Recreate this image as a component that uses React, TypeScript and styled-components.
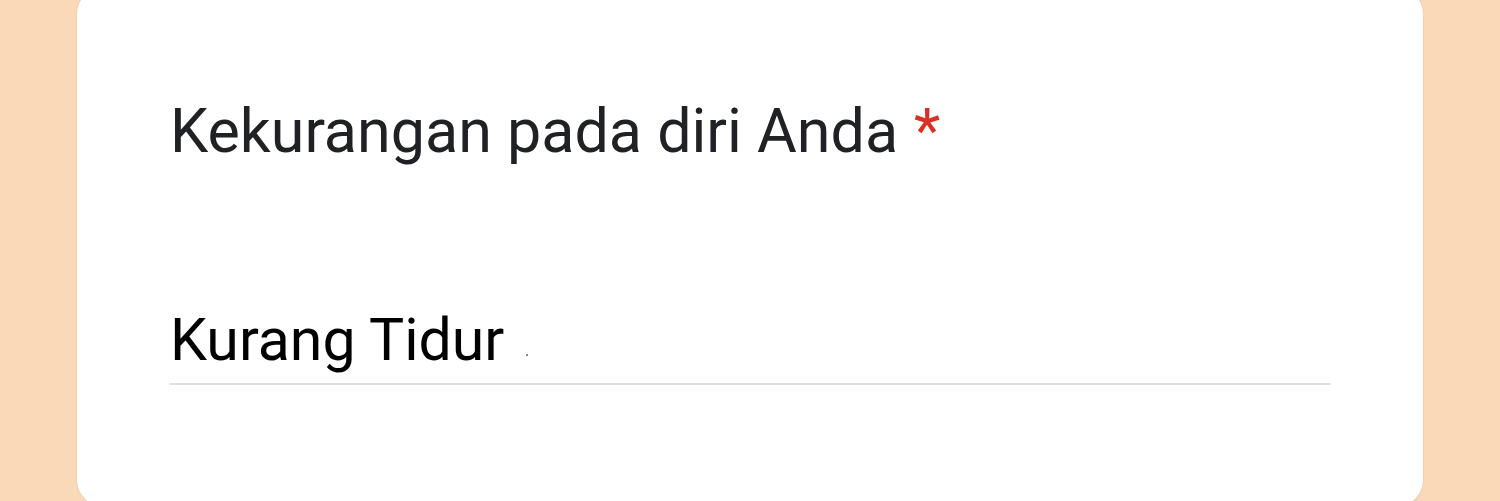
import React from "react";
import styled, { createGlobalStyle } from "styled-components";

const Global = createGlobalStyle`
  html, body { margin: 0; padding: 0; }
  body { background: #fad9b8; font-family: Roboto, "Noto Sans", Arial, sans-serif; }
`;

const Page = styled.div`
  width: 1500px;
  height: 501px;
  overflow: hidden;
  background: #fad9b8;
  padding: 0 77px;
  box-sizing: border-box;
`;

const Card = styled.div`
  margin-top: -12px;
  height: 518px;
  background: #ffffff;
  border-radius: 26px;
  box-shadow: 0 0 2px rgba(0, 0, 0, 0.12);
  box-sizing: border-box;
  padding: 107px 92px 0 93px;
  display: flex;
  flex-direction: column;
`;

const Title = styled.div`
  font-size: 61px;
  line-height: 72px;
  color: #202124;
  letter-spacing: 0;
`;

const Star = styled.span`
  color: #d93025;
  margin-left: 16px;
`;

const Answer = styled.div`
  margin-top: 137px;
  padding-bottom: 7px;
  border-bottom: 2px solid #e0e0e0;
  font-size: 59px;
  line-height: 72px;
  color: #000000;
  display: flex;
  align-items: baseline;
`;

const Dot = styled.span`
  width: 2px;
  height: 2px;
  background: #888;
  margin-left: 22px;
  align-self: flex-end;
  margin-bottom: 20px;
`;

export default function App() {
  return (
    <>
      <Global />
      <Page>
        <Card>
          <Title>
            Kekurangan pada diri Anda<Star>*</Star>
          </Title>
          <Answer>
            Kurang Tidur<Dot />
          </Answer>
        </Card>
      </Page>
    </>
  );
}
